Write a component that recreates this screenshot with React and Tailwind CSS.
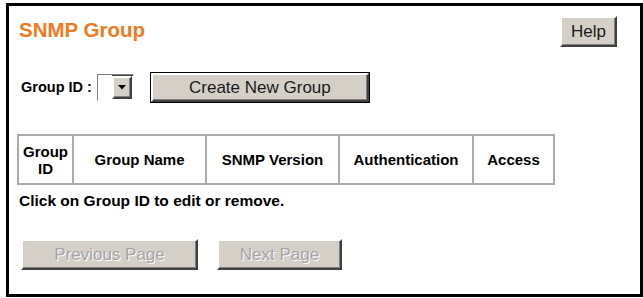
const bevel =
    'bg-[#d4d0c8] border-2 border-t-white border-l-white border-r-[#404040] border-b-[#404040] shadow-[inset_-1px_-1px_0_#808080]'

const Button = ({ children, className = '', disabled = false }) => (
    <button
        type="button"
        className={`${bevel} flex items-center justify-center text-[17px] leading-none ${
            disabled ? 'text-[#a4a4a4] [text-shadow:1px_1px_0_#ffffff]' : 'text-[#1a1a1a]'
        } ${className}`}
    >
        {children}
    </button>
)

const columns = [
    { label: ['Group', 'ID'], w: 'w-[55px]' },
    { label: ['Group Name'], w: 'w-[133px]' },
    { label: ['SNMP Version'], w: 'w-[133px]' },
    { label: ['Authentication'], w: 'w-[134px]' },
    { label: ['Access'], w: 'w-[81px]' },
]

export default function App() {
    return (
        <div className="w-[643px] h-[298px] bg-white pt-[3px] pl-[6px] font-['Liberation_Sans',Arial,sans-serif]">
            <div className="w-[637px] h-[294px] border-[3px] border-black pl-[10px] pr-[23px] flex flex-col">
                {/* header */}
                <div className="flex items-start justify-between pt-[10px]">
                    <h1 className="mt-[1px] text-[20.5px] leading-[25px] font-bold text-[#f07a1e]">SNMP Group</h1>
                    <Button className="w-[57px] h-[31px] text-[17.5px]">Help</Button>
                </div>

                {/* group selector */}
                <div className="flex items-center mt-[25px] h-[31px] ml-[2px]">
                    <span className="text-[14.5px] font-bold text-black">Group ID :</span>
                    <div className="ml-[5px] w-[37px] h-[27px] flex border border-t-[#808080] border-l-[#808080] border-r-white border-b-white shadow-[inset_1px_1px_0_#404040]">
                        <div className="flex-1 bg-white" />
                        <div className={`${bevel} w-[20px] mt-[1px] mb-[1px] mr-[1px] flex items-center justify-center`}>
                            <svg width="8" height="5" viewBox="0 0 8 5">
                                <path d="M0 0h8L4 4.5z" fill="#000" />
                            </svg>
                        </div>
                    </div>
                    <div className="ml-[16px] border border-black">
                        <Button className="w-[218px] h-[29px]">Create New Group</Button>
                    </div>
                </div>

                {/* table */}
                <table className="mt-[31px] -ml-[2px] border-collapse w-max">
                    <thead>
                        <tr className="h-[49px]">
                            {columns.map((c) => (
                                <th
                                    key={c.label.join(' ')}
                                    className={`${c.w} border-2 border-[#ababab] p-0 text-center text-[15px] leading-[17px] font-bold text-black`}
                                >
                                    {c.label.map((l) => (
                                        <div key={l}>{l}</div>
                                    ))}
                                </th>
                            ))}
                        </tr>
                    </thead>
                </table>

                <p className="mt-[7px] text-[15.5px] leading-[18px] font-bold text-black">
                    Click on Group ID to edit or remove.
                </p>

                {/* paging */}
                <div className="flex mt-[29px] ml-[2px] gap-[19px]">
                    <Button disabled className="w-[177px] h-[31px]">Previous Page</Button>
                    <Button disabled className="w-[125px] h-[31px]">Next Page</Button>
                </div>
            </div>
        </div>
    )
}
